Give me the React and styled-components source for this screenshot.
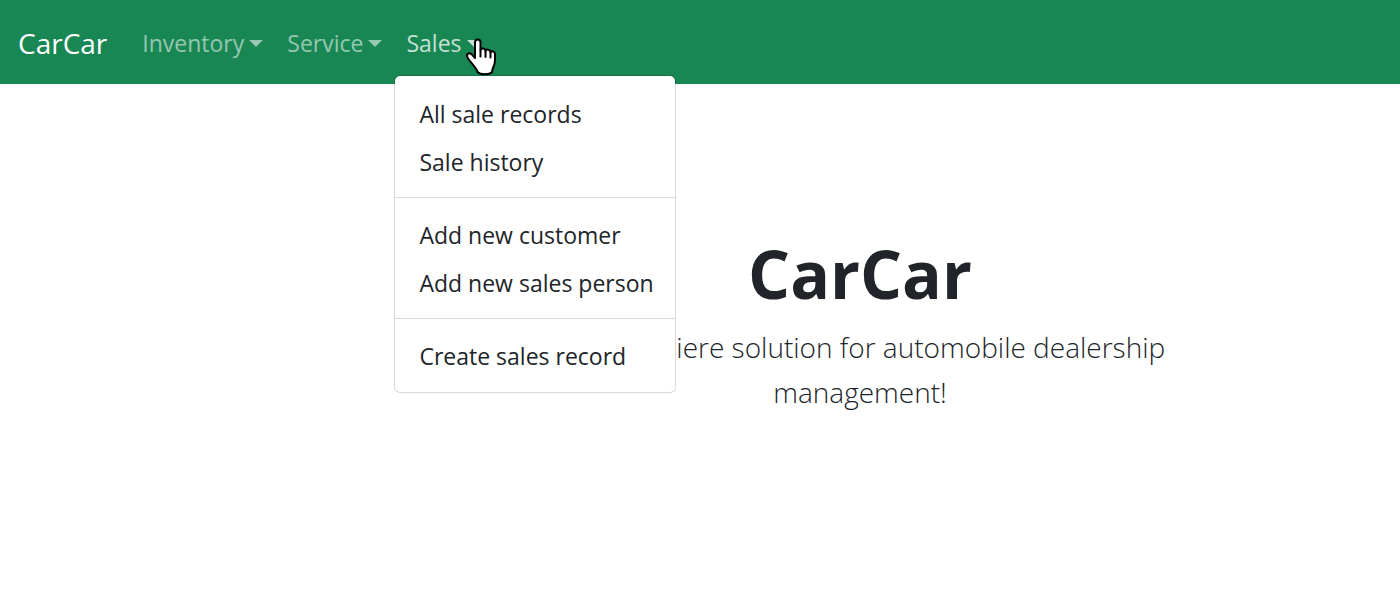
import React from "react";
import styled, { createGlobalStyle } from "styled-components";

const GlobalStyle = createGlobalStyle`
  *, *::before, *::after { box-sizing: border-box; }
  body {
    margin: 0;
    background: #fff;
    color: #212529;
    font-family: "Segoe UI", "Open Sans", "Noto Sans", sans-serif;
    font-size: 23px;
    line-height: 36px;
  }
`;

const Navbar = styled.nav`
  display: flex;
  align-items: center;
  padding: 12px 18px;
  background: #198754;
`;

const Brand = styled.a`
  margin-right: 23px;
  padding: 9px 0 7px;
  color: #fff;
  font-size: 28px;
  line-height: 44px;
  text-decoration: none;
`;

const NavList = styled.ul`
  display: flex;
  margin: 0;
  padding: 0;
  list-style: none;
`;

const NavItem = styled.li`
  position: relative;
`;

const NavToggle = styled.button`
  display: flex;
  align-items: center;
  gap: 5px;
  padding: 13px 12px 11px;
  border: 0;
  background: none;
  color: ${(p) => (p.$active ? "rgba(255, 255, 255, 0.75)" : "rgba(255, 255, 255, 0.55)")};
  font: inherit;
  cursor: pointer;

  &::after {
    content: "";
    border-top: 7px solid;
    border-right: 7px solid transparent;
    border-left: 7px solid transparent;
  }
`;

const Menu = styled.ul`
  position: absolute;
  top: 63px;
  left: 0;
  z-index: 10;
  width: 282px;
  margin: 0;
  padding: 13px 0;
  border: 1px solid rgba(0, 0, 0, 0.15);
  border-radius: 6px;
  background: #fff;
  background-clip: padding-box;
  list-style: none;
`;

const MenuLink = styled.a`
  display: block;
  padding: 7px 24px 5px;
  color: #212529;
  text-decoration: none;
  white-space: nowrap;
`;

const Divider = styled.hr`
  margin: 12px 0;
  border: 0;
  border-top: 1px solid rgba(0, 0, 0, 0.15);
`;

const Pointer = styled.svg`
  position: absolute;
  top: 26px;
  left: 71px;
  z-index: 20;
  width: 32px;
  height: 38px;
  pointer-events: none;
`;

const Hero = styled.main`
  margin-left: 320px;
  padding: 149px 0 72px;
  text-align: center;
`;

const Title = styled.h1`
  margin: 0 0 12px;
  font-size: 66px;
  font-weight: 700;
  line-height: 80px;
`;

const Lead = styled.p`
  max-width: 640px;
  margin: 0 auto;
  font-size: 28px;
  font-weight: 300;
  line-height: 45px;
`;

const saleGroups = [
  ["All sale records", "Sale history"],
  ["Add new customer", "Add new sales person"],
  ["Create sales record"],
];

function SalesMenu() {
  return (
    <Menu>
      {saleGroups.map((group, index) => (
        <React.Fragment key={group[0]}>
          {index > 0 && (
            <li>
              <Divider />
            </li>
          )}
          {group.map((label) => (
            <li key={label}>
              <MenuLink href="#">{label}</MenuLink>
            </li>
          ))}
        </React.Fragment>
      ))}
    </Menu>
  );
}

function HandPointer() {
  return (
    <Pointer viewBox="0 0 32 38" aria-hidden="true">
      <path
        d="M10 20V4.500c0-4 5.500-4 5.500 0V12c.8-2.300 5-2 5 1 .8-2.200 5-1.700 5 1.200 1-1.600 4.500-1 4.500 1.800V22c0 3-.8 5.500-2 8-.6 1.300-.8 2.500-.8 4-3 3-11.700 3-14.700 0-.3-2.500-2.500-4.500-4.300-7C6 24 3.500 22 2.300 19c-1.300-3.200 2-4.800 4.300-2.800Z"
        fill="#fff"
        stroke="#000"
        strokeWidth="2"
        strokeLinejoin="round"
      />
      <path
        d="M15.500 12v6.500M20.500 13v6M25.500 14.500V19.500"
        fill="none"
        stroke="#000"
        strokeWidth="2"
        strokeLinecap="round"
      />
    </Pointer>
  );
}

export default function App() {
  return (
    <>
      <GlobalStyle />
      <Navbar>
        <Brand href="#">CarCar</Brand>
        <NavList>
          <NavItem>
            <NavToggle type="button">Inventory</NavToggle>
          </NavItem>
          <NavItem>
            <NavToggle type="button">Service</NavToggle>
          </NavItem>
          <NavItem>
            <NavToggle type="button" $active aria-expanded="true">
              Sales
            </NavToggle>
            <SalesMenu />
            <HandPointer />
          </NavItem>
        </NavList>
      </Navbar>
      <Hero>
        <Title>CarCar</Title>
        <Lead>The premiere solution for automobile dealership management!</Lead>
      </Hero>
    </>
  );
}
